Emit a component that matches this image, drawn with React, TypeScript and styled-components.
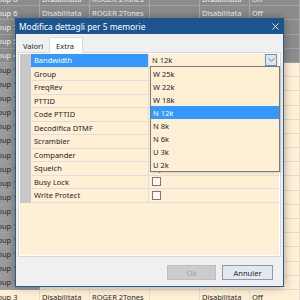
import React from 'react';
import styled, { createGlobalStyle } from 'styled-components';

const GlobalStyle = createGlobalStyle`
  html, body {
    margin: 0;
    padding: 0;
    overflow: hidden;
  }
  body {
    font-family: 'Noto Sans', 'Liberation Sans', sans-serif;
    font-size: 7.5px;
  }
`;

const Page = styled.div`
  position: relative;
  width: 300px;
  height: 300px;
  overflow: hidden;
  background: #ffefd5;
`;

// the memory list behind the dialog
const BgTable = styled.div`
  display: flex;
  flex-direction: column;
  margin-top: -8px;
  margin-left: -13px;
`;

const BgRow = styled.div`
  display: grid;
  grid-template-columns: 53px 50px 60px 50px 50px 50px;
  height: 14.2px;
`;

const BgCell = styled.div<{ $tone: 'sel' | 'head' | 'plain' }>`
  display: flex;
  align-items: center;
  padding-left: 2px;
  white-space: nowrap;
  overflow: hidden;
  border-right: 1px solid ${(p) => (p.$tone === 'plain' ? '#e6dccb' : '#a9a9a9')};
  border-bottom: 1px solid ${(p) => (p.$tone === 'plain' ? '#e6dccb' : '#a0a0a0')};
  background: ${(p) => (p.$tone === 'sel' ? '#8c8c8c' : p.$tone === 'head' ? '#9a9a9a' : '#ffefd5')};
  color: ${(p) => (p.$tone === 'sel' ? '#f2f2f2' : '#2a2a2a')};
`;

const Dialog = styled.div`
  position: absolute;
  left: 15px;
  top: 18px;
  width: 269px;
  height: 269px;
  display: flex;
  flex-direction: column;
  background: #f0f0f0;
  border: 1px solid #2b5d94;
  border-top: none;
  box-sizing: border-box;
  box-shadow: 0 0 9px rgba(0, 0, 0, 0.35);
`;

const TitleBar = styled.div`
  height: 16px;
  flex: none;
  display: flex;
  align-items: center;
  justify-content: space-between;
  padding: 0 5px 0 4px;
  margin: 0 -1px;
  background: #1c5490;
  color: #ffffff;
  font-size: 8.4px;
`;

const CloseGlyph = styled.svg`
  width: 7px;
  height: 7px;
`;

const Body = styled.div`
  flex: 1;
  display: flex;
  flex-direction: column;
  padding: 2px 2px 0 2px;
`;

const TabStrip = styled.div`
  display: flex;
  align-items: flex-end;
  height: 16px;
`;

const Tab = styled.div<{ $active?: boolean }>`
  height: ${(p) => (p.$active ? '16px' : '14px')};
  display: flex;
  align-items: center;
  padding: ${(p) => (p.$active ? '0 8px 0 6px' : '0 5px 0 4px')};
  box-sizing: border-box;
  background: ${(p) => (p.$active ? '#ffffff' : '#f0f0f0')};
  border: 1px solid ${(p) => (p.$active ? '#d9d9d9' : 'transparent')};
  border-bottom: none;
  color: #1e1e1e;
  margin-bottom: ${(p) => (p.$active ? '-1px' : '0')};
  position: relative;
`;

const TabPanel = styled.div`
  height: 205px;
  border: 1px solid #d9d9d9;
  background: #ffffff;
  padding: 1px;
  box-sizing: border-box;
`;

const Grid = styled.div`
  position: relative;
  height: 100%;
  background: #ffefd5;
  display: flex;
  flex-direction: column;
`;

const PropRow = styled.div`
  display: grid;
  grid-template-columns: 11px 118px 1fr;
  height: 13.5px;
  flex: none;
`;

const Gutter = styled.div`
  background: #c8c8c8;
`;

const Label = styled.div<{ $selected?: boolean }>`
  display: flex;
  align-items: center;
  padding-left: 3px;
  border-right: 1px solid #dedede;
  border-bottom: 1px solid #dedede;
  background: ${(p) => (p.$selected ? '#3399ff' : 'transparent')};
  color: ${(p) => (p.$selected ? '#ffffff' : '#1e1e2a')};
`;

const Value = styled.div`
  display: flex;
  align-items: center;
  padding-left: 3px;
  border-bottom: 1px solid #dedede;
  color: #1e1e2a;
`;

const Combo = styled.div`
  flex: 1;
  height: 100%;
  display: flex;
  align-items: center;
  justify-content: space-between;
  margin-left: -3px;
  padding: 0 2px 0 3px;
  box-sizing: border-box;
`;

const ComboButton = styled.div`
  width: 12px;
  height: 12px;
  box-sizing: border-box;
  border: 1px solid #6f93b8;
  background: #dbe6f0;
  display: flex;
  align-items: center;
  justify-content: center;
`;

const Check = styled.div`
  width: 9px;
  height: 9px;
  box-sizing: border-box;
  border: 1px solid #8a6f82;
  background: #fffaf2;
`;

const DropList = styled.div`
  position: absolute;
  left: 130px;
  top: 12px;
  width: 128px;
  border: 1px solid #7a7a7a;
  background: #ffefd5;
  box-shadow: 1px 1px 2px rgba(0, 0, 0, 0.15);
  z-index: 2;
`;

const DropItem = styled.div<{ $active?: boolean }>`
  height: 13px;
  display: flex;
  align-items: center;
  padding-left: 2px;
  background: ${(p) => (p.$active ? '#3399ff' : 'transparent')};
  color: ${(p) => (p.$active ? '#ffffff' : '#1e1e2a')};
`;

const Footer = styled.div`
  flex: 1;
  display: flex;
  justify-content: flex-end;
  align-items: flex-start;
  gap: 6px;
  padding: 8px 8px 0 0;
`;

const Button = styled.div<{ $disabled?: boolean }>`
  width: ${(p) => (p.$disabled ? '49px' : '51px')};
  height: 15px;
  box-sizing: border-box;
  display: flex;
  align-items: center;
  justify-content: center;
  border: 1px solid ${(p) => (p.$disabled ? '#bfbfbf' : '#8a9cad')};
  background: ${(p) => (p.$disabled ? '#cccccc' : '#e1e8ee')};
  color: ${(p) => (p.$disabled ? '#a0a0a0' : '#1e1e1e')};
`;

const bgRows = [
  'Group 8', 'Group 6', 'Group 7', 'Group 5', 'Group 4',
  'Group 1', 'Group 1', 'Group 1', 'Group 1', 'Group 1', 'Group 1',
  'Group 1', 'Group 1', 'Group 1', 'Group 1', 'Group 1', 'Group 1',
  'Group 1', 'Group 1', 'Group 1', 'Group 1', 'Group 3', 'Group 3',
];

const props = [
  'Bandwidth', 'Group', 'FreqRev', 'PTTID', 'Code PTTID', 'Decodifica DTMF',
  'Scrambler', 'Compander', 'Squelch', 'Busy Lock', 'Write Protect',
];

const bandwidths = ['W 25k', 'W 22k', 'W 18k', 'N 12k', 'N 8k', 'N 6k', 'U 3k', 'U 2k'];

export default function App() {
  return (
    <Page>
      <GlobalStyle />
      <BgTable>
        {bgRows.map((name, i) => {
          const sel = i < 5;
          const last = i >= 21;
          const first = sel ? 'sel' : last ? 'plain' : 'head';
          const rest = sel ? 'sel' : 'plain';
          const filled = sel || last;
          return (
            <BgRow key={i}>
              <BgCell $tone={first}>{name}</BgCell>
              <BgCell $tone={rest}>{filled ? 'Disabilitata' : ''}</BgCell>
              <BgCell $tone={rest}>{filled ? 'ROGER 2Tones' : ''}</BgCell>
              <BgCell $tone={rest} />
              <BgCell $tone={rest}>{filled ? 'Disabilitata' : ''}</BgCell>
              <BgCell $tone={rest}>{filled ? 'Off' : ''}</BgCell>
            </BgRow>
          );
        })}
      </BgTable>

      <Dialog>
        <TitleBar>
          <span>Modifica dettagli per 5 memorie</span>
          <CloseGlyph viewBox="0 0 7 7">
            <path d="M0.5 0.5 L6.5 6.5 M6.5 0.5 L0.5 6.5" stroke="#ffffff" strokeWidth="0.9" />
          </CloseGlyph>
        </TitleBar>
        <Body>
          <TabStrip>
            <Tab>Valori</Tab>
            <Tab $active>Extra</Tab>
          </TabStrip>
          <TabPanel>
            <Grid>
              {props.map((p, i) => (
                <PropRow key={p}>
                  <Gutter />
                  <Label $selected={i === 0}>{p}</Label>
                  <Value>
                    {i === 0 && (
                      <Combo>
                        <span>N 12k</span>
                        <ComboButton>
                          <svg width="7" height="4" viewBox="0 0 7 4">
                            <path d="M0.5 0.5 L3.5 3.2 L6.5 0.5" fill="none" stroke="#7a7a7a" strokeWidth="1" />
                          </svg>
                        </ComboButton>
                      </Combo>
                    )}
                    {i === 8 && 'Squelch 1'}
                    {i >= 9 && <Check />}
                  </Value>
                </PropRow>
              ))}
              <DropList>
                {bandwidths.map((b) => (
                  <DropItem key={b} $active={b === 'N 12k'}>
                    {b}
                  </DropItem>
                ))}
              </DropList>
            </Grid>
          </TabPanel>
          <Footer>
            <Button $disabled>Ok</Button>
            <Button>Annuler</Button>
          </Footer>
        </Body>
      </Dialog>
    </Page>
  );
}
